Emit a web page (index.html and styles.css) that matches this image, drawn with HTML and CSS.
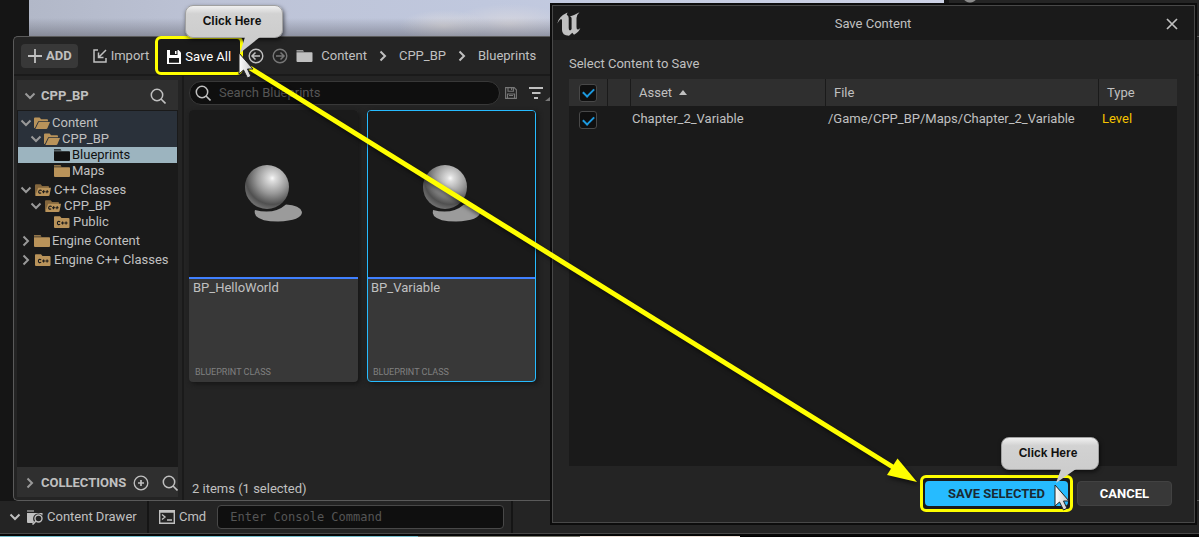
FILE: index.html
```html
<!DOCTYPE html>
<html lang="en">
<head>
<meta charset="utf-8">
<title>Save Content</title>
<link rel="stylesheet" href="styles.css">
</head>
<body>
<svg class="defs" aria-hidden="true">
  <defs>
    <symbol id="chev-down" viewBox="0 0 12 12"><path d="M1.500 3.500L6 8l4.500-4.500" fill="none" stroke="currentColor" stroke-width="2"/></symbol>
    <symbol id="chev-right" viewBox="0 0 12 12"><path d="M3.500 1.500L8 6l-4.500 4.500" fill="none" stroke="currentColor" stroke-width="2"/></symbol>
    <symbol id="search" viewBox="0 0 16 16"><circle cx="7" cy="7" r="5.700" fill="none" stroke="currentColor" stroke-width="1.500"/><path d="M11 11l4.500 4.500" stroke="currentColor" stroke-width="1.600"/></symbol>
    <symbol id="folder" viewBox="0 0 16 12"><path d="M0 .3h6.500l1 1.200H0zM0 2.200h15.200q.8 0 .8.800V11q0 1-1 1H1q-1 0-1-1z" fill="currentColor"/></symbol>
    <symbol id="folder-open" viewBox="0 0 16 12"><path d="M0 11V1.400Q0 .5 1 .5h4.600l1.500 1.700h6q.9 0 .9 1v1H4.200L1 10.800z" fill="currentColor"/><path d="M4.800 5H16l-2.600 6.200q-.3.800-1.200.800H1.400z" fill="currentColor"/></symbol>
    <symbol id="folder-cpp" viewBox="0 0 16 12"><path d="M0 1q0-.7.8-.7H6L7.500 2H14.500q1 0 1 1v8q0 1-1 1H1q-1 0-1-1z" fill="currentColor"/><path d="M6.200 5.700Q3.400 4.600 3.400 7T6.200 8.300M7 7h3.300M8.600 5.400v3.200M10.600 7h3M12.100 5.400v3.200" fill="none" stroke="#1a1a1a" stroke-width="1.100"/></symbol>
    <symbol id="folder-cpp-open" viewBox="0 0 16 12"><path d="M0 11V1.200Q0 .3 1 .3h4.600L7.100 2h6q.9 0 .9 1v1H4L1 10z" fill="#83663d"/><path d="M3.200 3.800H16l-1.500 7.400q-.2.800-1.200.800H1q-1 0-.7-1z" fill="currentColor"/><path d="M6.700 6.400Q4 5.400 3.700 7.500T6.200 9M7 7.700h3.200M8.800 6.100l-.4 3.200M10.600 7.700h3M12.300 6.100l-.4 3.200" fill="none" stroke="#1a1a1a" stroke-width="1.100"/></symbol>
    <symbol id="disk" viewBox="0 0 14 14"><path d="M0 0h11.500L14 2.500V14H0z" fill="currentColor"/><path d="M3 0h7.500v5H3zM2 8h10v4.700H2z" fill="#1a1a1a"/><path d="M8 1h1.500v3H8z" fill="currentColor"/></symbol>
    <symbol id="disk-outline" viewBox="0 0 12 12"><path d="M.6.6h8.600l2.200 2.200v8.600H.6zM3 .6v3.600h5.400V.6M2.500 11V7h7v4M4 8.500h4M6.600 1v2" fill="none" stroke="currentColor" stroke-width="1.100"/></symbol>
    <symbol id="ball" viewBox="0 0 58 60"><path d="M10 46Q9 49 11 52 16 57.500 33 57.500 57 56.500 57 48 55 41 41 40.500 29 51 10 46z" fill="#9b9b9b"/><circle cx="22" cy="23" r="22" fill="url(#shine)"/></symbol>
    <radialGradient id="shine" cx=".62" cy=".3" r=".7"><stop offset="0" stop-color="#fafafa"/><stop offset=".1" stop-color="#dedede"/><stop offset=".5" stop-color="#999"/><stop offset=".85" stop-color="#505050"/><stop offset="1" stop-color="#6c6c6c"/></radialGradient>
    <linearGradient id="metal" x1="0" y1="0" x2="1" y2="0"><stop offset="0" stop-color="#fff"/><stop offset="1" stop-color="#c4c4c4"/></linearGradient>
    <symbol id="pointer" viewBox="0 0 16 28"><path d="M1 1v21l4.500-4 4 8 3.500-1.700L9.500 17H15z" fill="url(#metal)" stroke="#222" stroke-width="1"/></symbol>
  </defs>
</svg>
<div class="editor">
  <div class="stage">
    <div class="level"><div class="sky"></div><div class="details"></div></div>
    <section class="drawer" aria-label="Content Browser">
      <div class="toolbar">
        <button class="add"><svg width="14" height="14" viewBox="0 0 14 14"><path d="M7 0v14M0 7h14" stroke="currentColor" stroke-width="1.800"/></svg>ADD</button>
        <button class="import"><svg width="14" height="14" viewBox="0 0 14 14"><path d="M5 1H1v12h12V9M13 1L6 8M5.500 3.500v5h5" fill="none" stroke="currentColor" stroke-width="1.500"/></svg>Import</button>
        <button class="save-all"><svg width="14" height="14"><use href="#disk"/></svg>Save All</button>
        <nav class="crumbs">
          <button aria-label="Back"><svg width="16" height="16" viewBox="0 0 16 16"><path d="M12 8H4.500M7.500 4.500L4 8l3.500 3.500" fill="none" stroke="currentColor" stroke-width="1.500"/><circle cx="8" cy="8" r="6.800" fill="none" stroke="currentColor" stroke-width="1.400"/></svg></button>
          <button class="dim" aria-label="Forward"><svg width="16" height="16" viewBox="0 0 16 16"><path d="M4 8h7.500M8.500 4.500L12 8l-3.500 3.500" fill="none" stroke="currentColor" stroke-width="1.500"/><circle cx="8" cy="8" r="6.800" fill="none" stroke="currentColor" stroke-width="1.400"/></svg></button>
          <svg width="17" height="12"><use href="#folder"/></svg>
          <a href="#content">Content</a>
          <svg class="sep" width="12" height="12"><use href="#chev-right"/></svg>
          <a href="#cpp">CPP_BP</a>
          <svg class="sep" width="12" height="12"><use href="#chev-right"/></svg>
          <a href="#blueprints">Blueprints</a>
        </nav>
      </div>
      <div class="browser">
        <aside class="sidebar">
          <div class="side-head"><svg class="arrow"><use href="#chev-down"/></svg><b>CPP_BP</b><button aria-label="Search folders"><svg width="16" height="16"><use href="#search"/></svg></button></div>
          <ul class="tree">
            <li class="root path"><svg class="arrow"><use href="#chev-down"/></svg><svg class="fold"><use href="#folder-open"/></svg>Content</li>
            <li class="l1 path"><svg class="arrow"><use href="#chev-down"/></svg><svg class="fold"><use href="#folder-open"/></svg>CPP_BP</li>
            <li class="l2 selected"><svg class="fold"><use href="#folder"/></svg>Blueprints</li>
            <li class="l2"><svg class="fold"><use href="#folder"/></svg>Maps</li>
            <li class="root cpp"><svg class="arrow"><use href="#chev-down"/></svg><svg class="fold"><use href="#folder-cpp-open"/></svg>C++ Classes</li>
            <li class="l1 cpp"><svg class="arrow"><use href="#chev-down"/></svg><svg class="fold"><use href="#folder-cpp-open"/></svg>CPP_BP</li>
            <li class="l2 cpp"><svg class="fold"><use href="#folder-cpp"/></svg>Public</li>
            <li class="root"><svg class="arrow"><use href="#chev-right"/></svg><svg class="fold"><use href="#folder"/></svg>Engine Content</li>
            <li class="root cpp"><svg class="arrow"><use href="#chev-right"/></svg><svg class="fold"><use href="#folder-cpp"/></svg>Engine C++ Classes</li>
          </ul>
          <div class="side-head collections"><svg class="arrow"><use href="#chev-right"/></svg><b>COLLECTIONS</b><button class="plus" aria-label="Add collection"><svg width="16" height="16" viewBox="0 0 16 16"><circle cx="8" cy="8" r="6.800" fill="none" stroke="currentColor" stroke-width="1.300"/><path d="M8 5v6M5 8h6" stroke="currentColor" stroke-width="1.700"/></svg></button><button aria-label="Search collections"><svg width="16" height="16"><use href="#search"/></svg></button></div>
        </aside>
        <div class="assets">
          <div class="filter-row">
            <label class="search"><svg width="16" height="16"><use href="#search"/></svg><input type="text" aria-label="Search assets" placeholder="Search Blueprints"></label>
            <button class="dim" aria-label="Save search"><svg width="12" height="12"><use href="#disk-outline"/></svg></button>
            <button aria-label="Filter"><svg width="22" height="16" viewBox="0 0 22 16"><path d="M0 3h14M3 8h8.500M5 13h4" stroke="currentColor" stroke-width="2"/><path d="M21 12v4h-5z" fill="#777"/></svg></button>
          </div>
          <div class="tiles">
            <article class="tile"><div class="thumb"><svg width="58" height="60"><use href="#ball"/></svg></div><h3>BP_HelloWorld</h3><p>BLUEPRINT CLASS</p></article>
            <article class="tile chosen"><div class="thumb"><svg width="58" height="60"><use href="#ball"/></svg></div><h3>BP_Variable</h3><p>BLUEPRINT CLASS</p></article>
          </div>
          <div class="count">2 items (1 selected)</div>
        </div>
      </div>
    </section>
  </div>
  <footer class="status">
    <button class="drawer-btn"><svg width="12" height="12"><use href="#chev-down"/></svg><svg class="dicon" width="16" height="16" viewBox="0 0 16 16"><path d="M0 1h7v2H0z" fill="#777"/><path d="M0 4h15.500v2.500A5 5 0 0 0 7.200 13L6 14H1q-1 0-1-1z" fill="currentColor"/><circle cx="11.500" cy="9.500" r="3.500" fill="none" stroke="currentColor" stroke-width="1.400"/><path d="M9 12l-3.500 3.500" stroke="currentColor" stroke-width="1.600"/></svg>Content Drawer</button>
    <div class="cmd">
      <label for="console"><svg width="16" height="14" viewBox="0 0 16 14"><path d="M.7.7h14.600v12.600H.7zM.7 2h14.600M3 4.500L6 7l-3 2.500M8 10h5" fill="none" stroke="currentColor" stroke-width="1.400"/></svg>Cmd</label>
      <input id="console" type="text" placeholder="Enter Console Command">
    </div>
  </footer>
  <div class="horizon"></div>

  <section class="dialog" role="dialog" aria-label="Save Content">
    <header>
      <svg width="24" height="24" viewBox="0 0 24 24"><path d="M.3 11.500Q1.500 4.500 10.500.5L9.700 2.800Q11.700 3.500 11.700 6v10q0 2 1.300 2.500 1-.2 1.600-1.500V6.500q0-1.800-1.800-2Q17 3.500 22.500.3 19.500 3 19.500 6V15q0 2.500 1.300 2.500 1 0 2.500-1.500Q22 20 17 22.700L15.300 20.800l-3.300 3Q5 23.500 5 18V8.500q0-1.500-1-1.500Q2.300 7.500.3 11.500z" fill="currentColor"/></svg>
      <h1>Save Content</h1>
      <button aria-label="Close"><svg width="12" height="12" viewBox="0 0 12 12"><path d="M1 1l10 10M11 1L1 11" stroke="currentColor" stroke-width="1.700"/></svg></button>
    </header>
    <div class="dialog-body">
      <p>Select Content to Save</p>
      <div class="list">
        <table>
          <colgroup><col class="c-check"><col class="c-icon"><col class="c-asset"><col><col class="c-type"></colgroup>
          <thead><tr><th><input type="checkbox" aria-label="Select all" checked></th><th></th><th>Asset<svg class="sort" width="8" height="5" viewBox="0 0 8 5"><path d="M4 0l4 5H0z" fill="currentColor"/></svg></th><th>File</th><th>Type</th></tr></thead>
          <tbody><tr><td><input type="checkbox" aria-label="Chapter_2_Variable" checked></td><td></td><td>Chapter_2_Variable</td><td>/Game/CPP_BP/Maps/Chapter_2_Variable</td><td class="type">Level</td></tr></tbody>
        </table>
      </div>
      <div class="actions"><span class="mark"><button class="primary">SAVE SELECTED</button></span><button class="cancel">CANCEL</button></div>
    </div>
  </section>

  <svg class="route" width="1199" height="537" viewBox="0 0 1199 537" aria-hidden="true"><path d="M250 68L896 469" stroke="#ff0" stroke-width="5"/><path d="M917 482L897.500 458.500 887 475z" fill="#ff0"/></svg>
  <div class="callout first">Click Here<svg class="tail" width="24" height="18" viewBox="0 0 24 18"><path d="M6 0L1 16 21 0z" fill="#cdcdcd"/></svg><svg class="cursor" width="16" height="28"><use href="#pointer"/></svg></div>
  <div class="callout second">Click Here<svg class="tail" width="24" height="18" viewBox="0 0 24 18"><path d="M6 0L1 14 21 0z" fill="#cdcdcd"/></svg><svg class="cursor" width="16" height="28"><use href="#pointer"/></svg></div>
</div>
</body>
</html>
```

FILE: styles.css
```css
* { box-sizing: border-box; }
body { margin: 0; background: #151515; color: #c0c0c0; font: 13px/16px Roboto, sans-serif; }
button { display: inline-flex; align-items: center; padding: 0; border: 0; background: none; color: inherit; font: inherit; }
input { font: inherit; color: inherit; outline: 0; }
h1, h3, p, ul { margin: 0; padding: 0; font-size: inherit; font-weight: 400; }
a { color: inherit; text-decoration: none; }
svg { display: block; flex: none; }
.defs { position: absolute; width: 0; height: 0; }

.editor { position: relative; display: flex; flex-direction: column; min-height: 100vh; overflow: hidden; }
.stage { position: relative; flex: 1; display: flex; flex-direction: column; }
.level { display: flex; height: 36px; padding-left: 29px; }
.sky { flex: 1; background:
  linear-gradient(transparent 50%, rgba(70,70,80,.4)),
  radial-gradient(45px 16px at 415px 26px, #d8d8de, transparent),
  radial-gradient(60px 20px at 480px 24px, #d6d6de, transparent),
  linear-gradient(90deg, #b2b8c8, #bdc3d6 20%, #c0c8de 50%, #cdd2e6); }
.details { width: 255px; border-left: 5px solid #151515; background: radial-gradient(circle at 21px -5px, #8a8a8a 7px, transparent 8px), #242424; }

.drawer { flex: 1; display: flex; flex-direction: column; margin-left: 13px; background: #242424; border: 1px solid #5a5a5a; border-right: 0; border-radius: 5px 0 0 5px; }
.toolbar { display: flex; align-items: center; height: 39px; padding-left: 7px; border-bottom: 2px solid #1a1a1a; }
.add { height: 24px; padding: 0 6px 0 7px; gap: 4px; border-radius: 4px; background: #383838; font-weight: 700; }
.import { gap: 4px; margin-left: 15px; }
.save-all { align-self: flex-start; height: 39px; width: 88px; margin: -1px 0 0 6px; padding: 3px 0 0 9px; gap: 4px; border: 3px solid #ff0; border-radius: 6px; background: #1a1a1a; color: #fff; white-space: nowrap; }
.crumbs { display: flex; align-items: center; gap: 8px; margin-left: 5px; }
.crumbs .sep { margin: 0 2px; }
.dim { color: #777; }
.browser { flex: 1; display: flex; }
.sidebar { display: flex; flex-direction: column; width: 170px; padding: 4px 4px 3px 3px; border-right: 2px solid #1a1a1a; }
.side-head { display: flex; align-items: center; height: 30px; padding: 1px 12px 0 7px; gap: 5px; background: #2f2f2f; overflow: hidden; }
.side-head button { margin-left: auto; }
.collections { padding-right: 0; }
.collections .plus { margin-left: 2px; }
.tree { flex: 1; list-style: none; background: #1a1a1a; padding: 1px; }
.tree li { display: flex; align-items: center; height: 16px; gap: 2px; white-space: nowrap; }
.tree .root { height: 19px; padding: 3px 0 0 2px; }
.tree .root:first-child { height: 20px; padding-top: 4px; }
.tree .l1 { padding-left: 12px; }
.tree .l2 { padding-left: 36px; }
.tree .path { background: #2a313a; }
.tree .selected { background: #9cb4bf; color: #111; }
.arrow { width: 12px; height: 12px; color: #999; }
.fold { width: 16px; height: 12px; color: #b9935a; }
.selected .fold { color: #111; }
.tree .cpp { gap: 3px; }

.assets { flex: 1; display: flex; flex-direction: column; padding: 5px 0 3px 5px; }
.filter-row { display: flex; align-items: center; height: 24px; gap: 5px; }
.search { display: flex; align-items: center; width: 311px; height: 24px; padding: 0 5px; gap: 8px; border: 1px solid #383838; border-radius: 12px; background: #0f0f0f; }
.search input { flex: 1; min-width: 0; padding: 0; border: 0; background: none; }
input::placeholder { color: #555; opacity: 1; }
.filter-row button + button { margin-left: 7px; }
.tiles { display: flex; gap: 9px; margin-top: 5px; }
.tile { display: flex; flex-direction: column; width: 169px; height: 272px; border-radius: 4px; background: #383838; overflow: hidden; box-shadow: 2px 2px 5px #151515; }
.thumb { display: flex; align-items: center; justify-content: center; height: 169px; border-bottom: 2px solid #4080ff; background: #1a1a1a; }
.tile h3 { padding: 1px 4px; }
.tile p { margin-top: auto; padding: 0 6px 2px; color: #808080; font-size: 9px; }
.chosen { border: 1px solid #26bbff; }
.chosen .thumb { height: 168px; }
.chosen h3 { padding-left: 3px; }
.chosen p { padding: 0 5px 1px; }
.count { margin-top: auto; padding-left: 3px; }

.status { display: flex; height: 33px; border-bottom: 1px solid #484848; background: #242424; }
.drawer-btn { width: 149px; padding-left: 9px; gap: 4px; border-right: 2px solid #151515; }
.drawer-btn .dicon { margin-left: 2px; }
.cmd { display: flex; align-items: center; width: 364px; padding: 0 7px 0 10px; gap: 11px; border-right: 2px solid #151515; }
.cmd label { display: flex; align-items: center; gap: 4px; }
.cmd input { flex: 1; min-width: 0; height: 24px; padding: 0 12px; border: 1px solid #484848; border-radius: 4px; background: #0f0f0f; font: 12px "DejaVu Sans Mono", monospace; }
.horizon { height: 3px; border-top: 2px solid #050505; background: linear-gradient(90deg, #75bccb 418px, #77776c 418px 580px, #eee1d8 580px 740px, #000 740px); }

.dialog { position: absolute; top: 3px; right: 2px; bottom: 12px; left: 550px; display: flex; flex-direction: column; border: 2px solid #0c0c0c; background: #242424; outline: 1px solid #484848; outline-offset: -3px; }
.dialog header { display: flex; align-items: center; justify-content: space-between; height: 34px; margin: 1px; padding: 1px 16px 0 4px; background: #1a1a1a; }
.dialog h1 { padding-right: 1px; }
.dialog-body { flex: 1; display: flex; flex-direction: column; padding: 15px 18px 11px 17px; }
.list { flex: 1; margin-top: 7px; background: #1a1a1a; }
table { width: 100%; border-collapse: separate; border-spacing: 0; table-layout: fixed; }
.c-check { width: 39px; } .c-icon { width: 23px; } .c-asset { width: 195px; } .c-type { width: 78px; }
tr { height: 27px; }
th, td { padding: 0; text-align: left; font-weight: 400; }
th { padding-left: 8px; background: #2f2f2f; border-right: 1px solid #1a1a1a; }
th:last-child { border-right: 0; }
td { padding-left: 1px; vertical-align: top; padding-top: 5px; }
td:nth-child(4) { padding-left: 2px; }
td.type { padding-left: 3px; color: #f5c400; }
th:first-child, td:first-child { padding-left: 10px; }
.sort { display: inline-block; margin: 0 0 2px 7px; }
input[type=checkbox] { display: flex; align-items: center; justify-content: center; appearance: none; width: 18px; height: 18px; margin: 0; border: 1px solid #484848; border-radius: 3px; background: #0f0f0f; }
input[type=checkbox]:checked::after { content: ""; width: 9px; height: 5px; margin-bottom: 2px; border: solid #1c9ae0; border-width: 0 0 2px 2px; transform: rotate(-45deg); }
.actions { display: flex; align-items: center; justify-content: flex-end; gap: 4px; margin: 9px 5px 0 0; }
.mark { padding: 3px 2px; border: 3px solid #ff0; border-radius: 6px; background: #1a1a1a; }
.actions button { justify-content: center; height: 25px; border-radius: 4px; font-weight: 700; }
.primary { width: 143px; background: #26bbff; color: #1a2a33; }
.cancel { width: 95px; border: 1px solid #424242; background: #383838; color: #fff; }

/* Tutorial marks drawn over the windows */
.route { position: absolute; top: 0; left: 0; pointer-events: none; filter: drop-shadow(2px 3px 2px rgba(0,0,0,.55)); }
.callout { position: absolute; width: 98px; height: 33px; border: 1px solid #a0a0a0; border-radius: 8px; background: linear-gradient(#f0f0f0, #d2d2d2 25%, #cdcdcd); color: #111; font: bold 12px/31px "Liberation Sans", sans-serif; text-align: center; box-shadow: 1px 2px 4px rgba(0,0,0,.6); }
.callout svg { position: absolute; left: 53px; }
.tail { top: 31px; }
.callout .cursor { top: 46px; left: 52px; }
.first { top: 5px; left: 185px; padding-right: 4px; }
.second { top: 437px; left: 1001px; padding-right: 4px; }
```
